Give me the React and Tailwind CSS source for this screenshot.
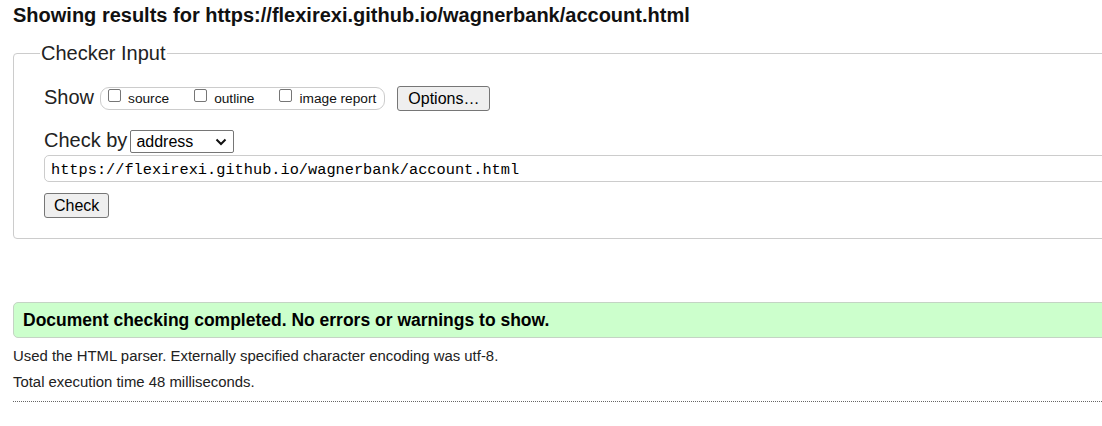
import React from "react";

function Box() {
  return <span className="block w-[13px] h-[13px] border border-[#767676] rounded-[2px] bg-white shrink-0 mt-[1px]" />;
}

function Opt({ label, first }) {
  return (
    <span className={"flex items-start " + (first ? "" : "ml-[25px]")}>
      <Box />
      <span className="ml-[7px] mt-[3px] text-[13.7px] leading-[16px] text-[#111]">{label}</span>
    </span>
  );
}

export default function App() {
  return (
    <div className="w-[1102px] h-[426px] overflow-hidden bg-white text-black font-['Liberation_Sans',Arial,sans-serif]">
      <div className="pl-[13px] w-[1130px]">
        <h2 className="pt-[4px] text-[20px] font-bold leading-[23px] text-[#111]">
          Showing results for https://flexirexi.github.io/wagnerbank/account.html
        </h2>
        <fieldset className="mt-[15px] border border-[#cccccc] rounded-[4px] pl-[30px] pt-[21px] pb-[20px]">
          <legend className="ml-[-4px] px-[1px] text-[20px] leading-[23px] text-[#222]">Checker Input</legend>
          <div className="flex items-start h-[25px]">
            <span className="text-[20px] leading-[23px] text-[#222]">Show</span>
            <div className="ml-[6px] mt-[1px] h-[23px] flex items-start border border-[#cccccc] rounded-[9px] pl-[7px] pr-[8px]">
              <Opt label="source" first />
              <Opt label="outline" />
              <Opt label="image report" />
            </div>
            <button className="ml-[12px] h-[25px] px-[10px] bg-[#efefef] border border-[#767676] rounded-[3px] text-[16px] leading-[18px] text-black">
              Options…
            </button>
          </div>
          <div className="mt-[16px] flex items-start h-[26px]">
            <span className="mt-[2px] text-[20px] leading-[23px] text-[#222]">Check by</span>
            <div className="ml-[3px] mt-[3px] w-[104px] h-[23px] border border-[#767676] rounded-[2px] bg-white flex items-center pl-[5px] pr-[6px]">
              <span className="text-[16px] leading-[18px] text-black flex-1">address</span>
              <svg width="12" height="8" viewBox="0 0 12 8">
                <polyline points="1.5,1.5 6,6 10.5,1.5" fill="none" stroke="#111" strokeWidth="2" />
              </svg>
            </div>
          </div>
          <div className="mt-[2px] h-[27px] mr-[-60px] border border-[#cccccc] rounded-[5px] flex items-center pl-[6px] pt-[3px]">
            <span className="font-['Liberation_Mono','DejaVu_Sans_Mono',monospace] text-[15.3px] leading-[18px] text-black">
              https://flexirexi.github.io/wagnerbank/account.html
            </span>
          </div>
          <button className="mt-[11px] h-[25px] px-[9px] bg-[#efefef] border border-[#767676] rounded-[3px] text-[16px] leading-[18px] text-black">
            Check
          </button>
        </fieldset>
        <div className="mt-[63px] h-[36px] bg-[#ccffcc] border border-[#c4d4c4] rounded-[5px] flex items-center pl-[9px]">
          <span className="text-[17.5px] font-bold leading-[20px] text-black">
            Document checking completed. No errors or warnings to show.
          </span>
        </div>
        <p className="mt-[9px] text-[14.9px] leading-[18px] text-[#222]">
          Used the HTML parser. Externally specified character encoding was utf-8.
        </p>
        <p className="mt-[8px] text-[14.9px] leading-[18px] text-[#222]">Total execution time 48 milliseconds.</p>
        <div className="mt-[10px] border-t border-dotted border-[#666]" />
      </div>
    </div>
  );
}
